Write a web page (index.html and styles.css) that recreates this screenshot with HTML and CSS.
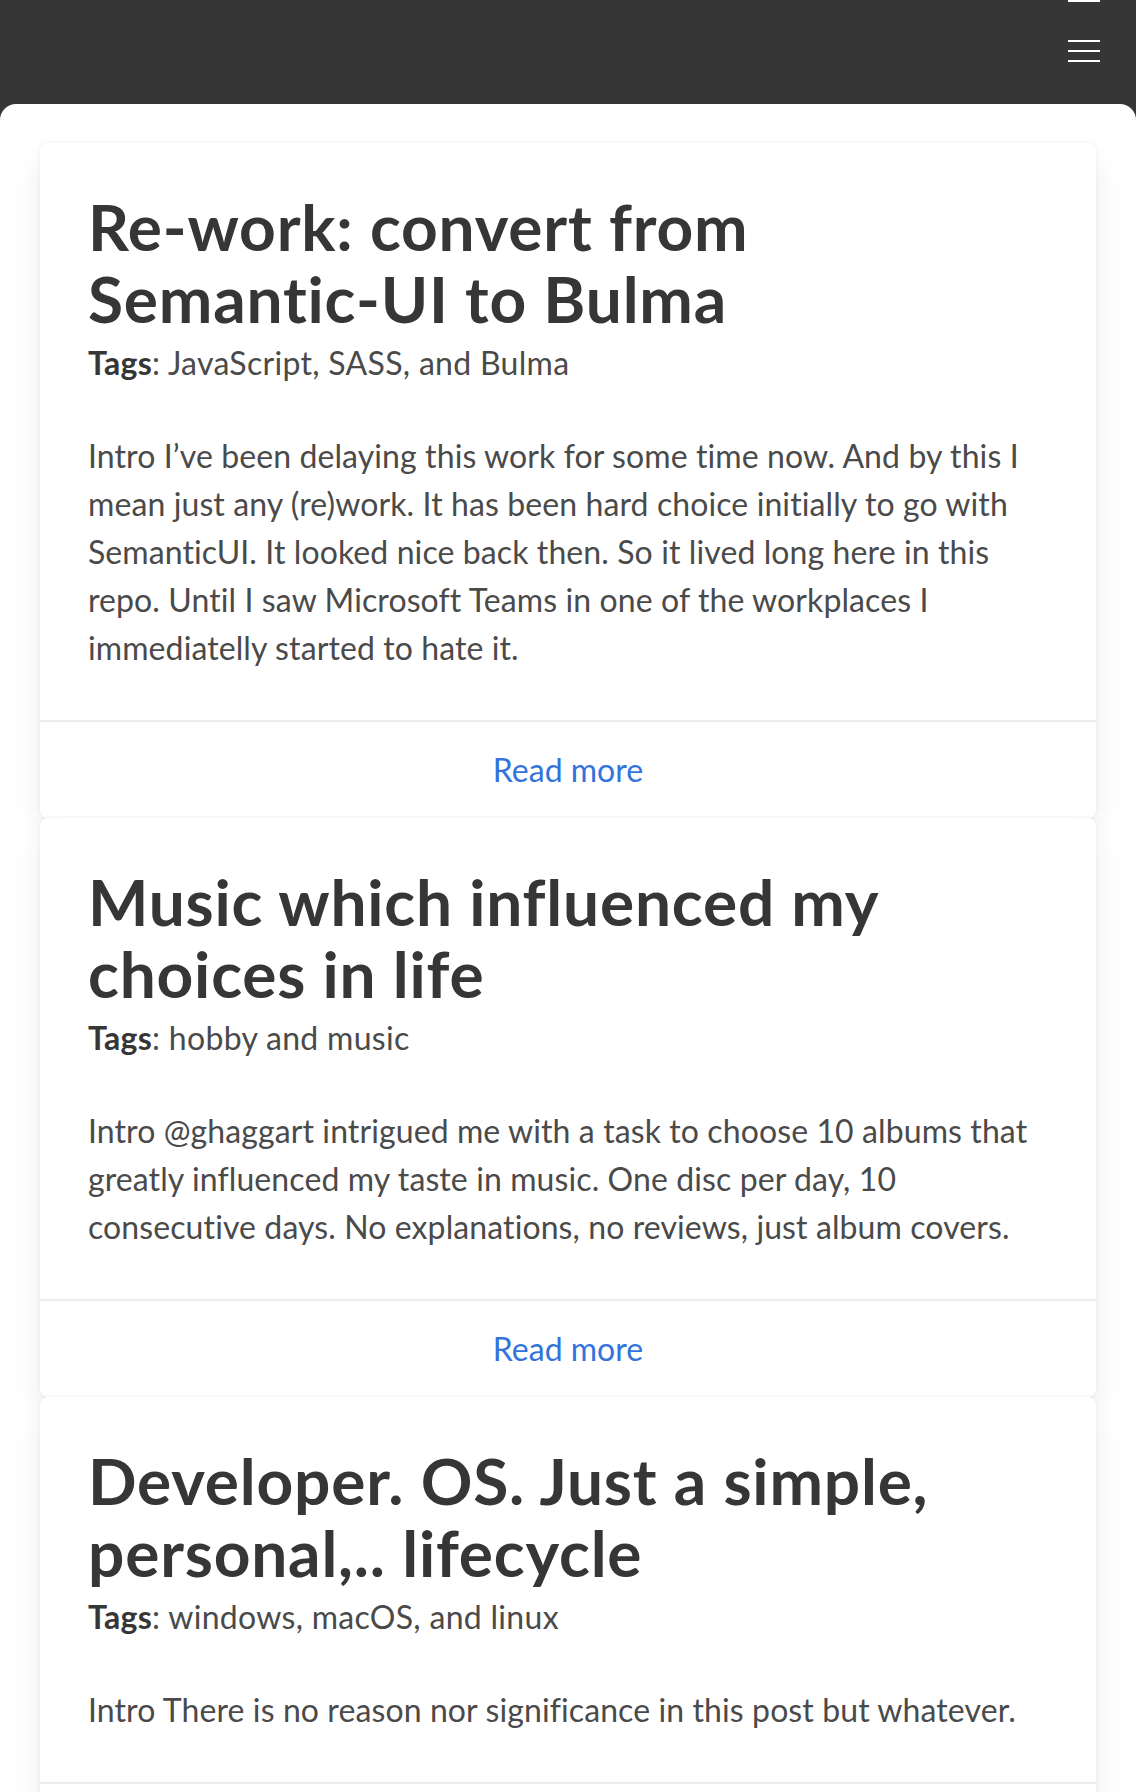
FILE: index.html
```html
<!DOCTYPE html>
<html lang="en">
<head>
<meta charset="utf-8">
<title>Blog</title>
<link rel="stylesheet" href="styles.css">
</head>
<body>
<nav class="navbar">
  <span class="navbar-edge"></span>
  <a class="navbar-burger" href="#" aria-label="menu">
    <span></span><span></span><span></span>
  </a>
</nav>
<main class="section">
  <article class="card">
    <div class="card-content">
      <h2 class="title">Re-work: convert from <span class="nowrap">Semantic-UI</span> to Bulma</h2>
      <p class="tags"><strong>Tags</strong>: JavaScript, SASS, and Bulma</p>
      <p class="excerpt">Intro I’ve been delaying this work for some time now. And by this I mean just any (re)work. It has been hard choice initially to go with SemanticUI. It looked nice back then. So it lived long here in this repo. Until I saw Microsoft Teams in one of the workplaces I immediatelly started to hate it.</p>
    </div>
    <footer class="card-footer"><a class="card-footer-item" href="#">Read more</a></footer>
  </article>
  <article class="card">
    <div class="card-content">
      <h2 class="title">Music which influenced my choices in life</h2>
      <p class="tags"><strong>Tags</strong>: hobby and music</p>
      <p class="excerpt">Intro @ghaggart intrigued me with a task to choose 10 albums that greatly influenced my taste in music. One disc per day, 10 consecutive days. No explanations, no reviews, just album covers.</p>
    </div>
    <footer class="card-footer"><a class="card-footer-item" href="#">Read more</a></footer>
  </article>
  <article class="card">
    <div class="card-content">
      <h2 class="title">Developer. OS. Just a simple, personal,.. lifecycle</h2>
      <p class="tags"><strong>Tags</strong>: windows, macOS, and linux</p>
      <p class="excerpt">Intro There is no reason nor significance in this post but whatever.</p>
    </div>
    <footer class="card-footer"><a class="card-footer-item" href="#">Read more</a></footer>
  </article>
</main>
</body>
</html>
```
FILE: styles.css
```css
html, body {
  margin: 0;
  padding: 0;
}
body {
  background: #363636;
  font-family: Lato, "Noto Sans", sans-serif;
  color: #4a4a4a;
  font-size: 32px;
  line-height: 48px;
}
.navbar {
  position: relative;
  height: 104px;
  display: flex;
  justify-content: flex-end;
}
.navbar-edge {
  position: absolute;
  top: 0;
  right: 36px;
  width: 32px;
  height: 2px;
  background: #fff;
}
.navbar-burger {
  position: relative;
  display: block;
  width: 104px;
  height: 104px;
}
.navbar-burger span {
  position: absolute;
  left: 36px;
  width: 32px;
  height: 2px;
  background: #fff;
}
.navbar-burger span:nth-child(1) { top: 40px; }
.navbar-burger span:nth-child(2) { top: 50px; }
.navbar-burger span:nth-child(3) { top: 60px; }

.section {
  background: #fff;
  border-radius: 16px 16px 0 0;
  padding: 39px 40px 0;
  min-height: 1700px;
}
.card {
  background: #fff;
  border-radius: 8px;
  box-shadow: 0 16px 32px -4px rgba(10, 10, 10, 0.1), 0 0 0 2px rgba(10, 10, 10, 0.02);
}
.card-content {
  padding: 48px;
}
.title {
  margin: 0;
  font-size: 64px;
  line-height: 72px;
  font-weight: 700;
  letter-spacing: 0.8px;
  color: #363636;
}
.nowrap {
  white-space: nowrap;
}
.tags {
  margin: 4px 0 0;
  letter-spacing: 0.3px;
}
.tags strong {
  color: #363636;
  font-weight: 700;
}
.excerpt {
  margin: 45px 0 0;
  letter-spacing: 0.1px;
}
.card-footer {
  display: flex;
  border-top: 2px solid #ededed;
}
.card-footer-item {
  flex: 1;
  display: flex;
  justify-content: center;
  padding: 24px;
  color: #3273dc;
  text-decoration: none;
}
```
